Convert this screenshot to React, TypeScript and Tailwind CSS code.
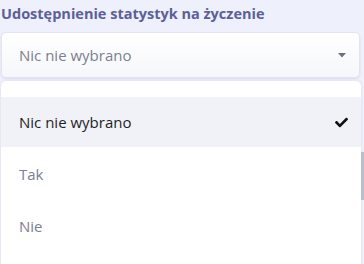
import React from 'react';
import { FaCheck } from 'react-icons/fa';

const OPTIONS = ['Nic nie wybrano', 'Tak', 'Nie'];

const App: React.FC = () => {
  const selected = 0;

  return (
    <div className="relative w-[364px] h-[264px] overflow-hidden bg-[#eef0fb]" style={{ fontFamily: '"Open Sans", "Noto Sans", sans-serif' }}>
      {/* page content peeking out behind the menu */}
      <div className="absolute right-0 top-[152px] w-[3px] h-[48px] bg-[#b9bed3]" />

      <div className="pl-px pr-1">
        <label className="block h-[32px] pt-[3px] text-[14.5px] font-bold text-[#5c6098]">
          Udostępnienie statystyk na życzenie
        </label>

        <button className="w-full h-[46px] flex items-center justify-between pl-[17px] pr-[13px] rounded-[5px] border border-[#e2e4ef] bg-gradient-to-b from-white to-[#f6f7fb] shadow-[0_1px_2px_rgba(80,90,140,0.12)]">
          <span className="text-[15px] text-[#7c8091]">Nic nie wybrano</span>
          <svg width="8" height="5" viewBox="0 0 8 5">
            <path d="M0 0 H8 L4 4.5 Z" fill="#6b6f80" />
          </svg>
        </button>

        <ul className="mt-[3px] mr-[-1px] bg-white rounded-t-[5px] pt-[16px] pb-[16px] shadow-[0_0_3px_rgba(80,90,140,0.12)]">
          {OPTIONS.map((opt, i) => (
            <li
              key={opt}
              className={`flex items-center justify-between pl-[18px] pr-[13px] text-[15px] ${
                i === selected ? 'h-[50px] bg-[#f1f2f7] text-[#1e1f24]' : 'h-[52px] pt-[2px] text-[#7c8091]'
              }`}
            >
              <span>{opt}</span>
              {i === selected && <FaCheck className="w-[13px] h-[13px] text-[#111]" />}
            </li>
          ))}
        </ul>
      </div>
    </div>
  );
};

export default App;
